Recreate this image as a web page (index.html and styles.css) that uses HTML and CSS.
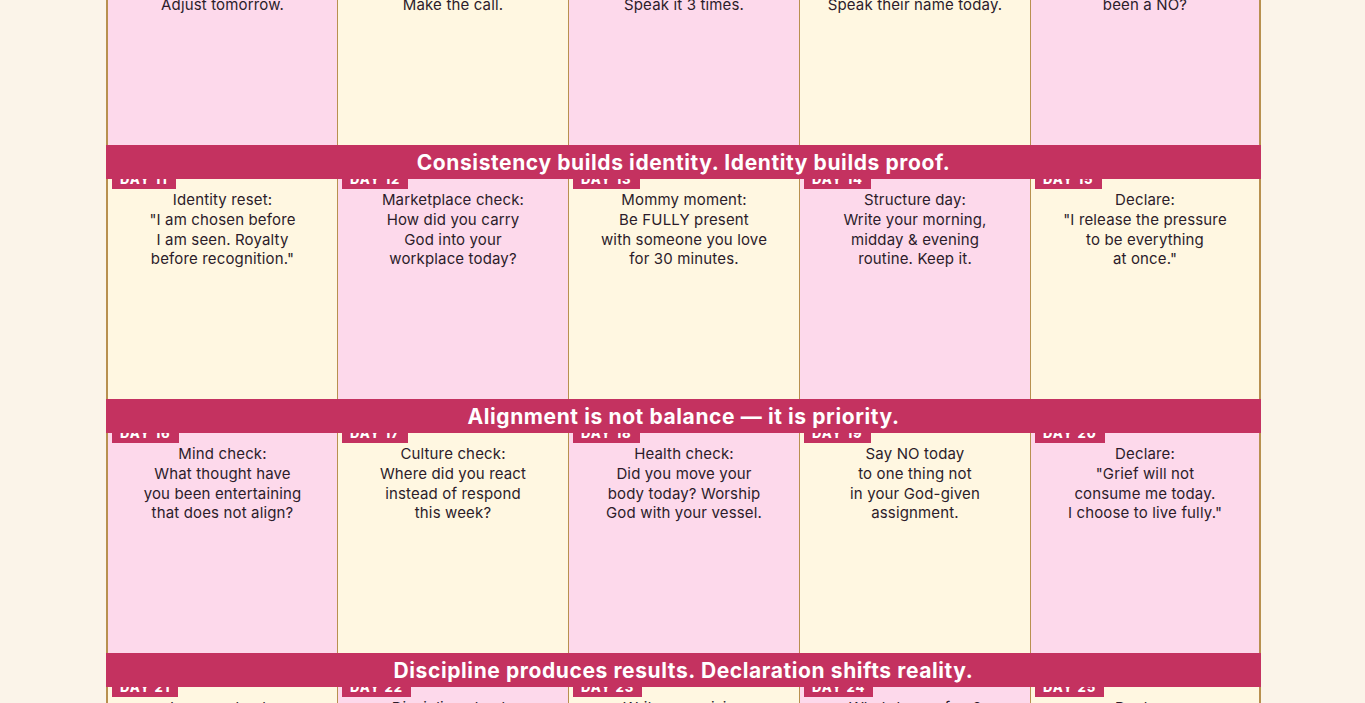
FILE: index.html
```html
<!DOCTYPE html>
<html lang="en">
<head>
<meta charset="utf-8">
<title>30-Day Alignment Calendar</title>
<link rel="stylesheet" href="styles.css">
</head>
<body>
<main class="page">
  <section class="calendar">
    <div class="week">
      <div class="cell pink"><span class="badge">Day 6</span><p>Evening review:<br>What worked today?<br>What didn't?<br>Adjust tomorrow.</p></div>
      <div class="cell cream"><span class="badge">Day 7</span><p>Relationship check:<br>Who have you been<br>meaning to reach?<br>Make the call.</p></div>
      <div class="cell pink"><span class="badge">Day 8</span><p>Declare:<br>"I am built for<br>this season."<br>Speak it 3 times.</p></div>
      <div class="cell cream"><span class="badge">Day 9</span><p>Gratitude:<br>Who poured into you<br>this year?<br>Speak their name today.</p></div>
      <div class="cell pink"><span class="badge">Day 10</span><p>Boundary check:<br>Where have you said<br>YES when it should have<br>been a NO?</p></div>
    </div>
    <div class="banner">Consistency builds identity. Identity builds proof.</div>
    <div class="week">
      <div class="cell cream"><span class="badge">Day 11</span><p>Identity reset:<br>"I am chosen before<br>I am seen. Royalty<br>before recognition."</p></div>
      <div class="cell pink"><span class="badge">Day 12</span><p>Marketplace check:<br>How did you carry<br>God into your<br>workplace today?</p></div>
      <div class="cell cream"><span class="badge">Day 13</span><p>Mommy moment:<br>Be FULLY present<br>with someone you love<br>for 30 minutes.</p></div>
      <div class="cell pink"><span class="badge">Day 14</span><p>Structure day:<br>Write your morning,<br>midday &amp; evening<br>routine. Keep it.</p></div>
      <div class="cell cream"><span class="badge">Day 15</span><p>Declare:<br>"I release the pressure<br>to be everything<br>at once."</p></div>
    </div>
    <div class="banner">Alignment is not balance — it is priority.</div>
    <div class="week">
      <div class="cell pink"><span class="badge">Day 16</span><p>Mind check:<br>What thought have<br>you been entertaining<br>that does not align?</p></div>
      <div class="cell cream"><span class="badge">Day 17</span><p>Culture check:<br>Where did you react<br>instead of respond<br>this week?</p></div>
      <div class="cell pink"><span class="badge">Day 18</span><p>Health check:<br>Did you move your<br>body today? Worship<br>God with your vessel.</p></div>
      <div class="cell cream"><span class="badge">Day 19</span><p>Say NO today<br>to one thing not<br>in your God-given<br>assignment.</p></div>
      <div class="cell pink"><span class="badge">Day 20</span><p>Declare:<br>"Grief will not<br>consume me today.<br>I choose to live fully."</p></div>
    </div>
    <div class="banner">Discipline produces results. Declaration shifts reality.</div>
    <div class="week">
      <div class="cell cream"><span class="badge">Day 21</span><p>Legacy check:<br>What are you building<br>that outlives you?<br>Name it.</p></div>
      <div class="cell pink"><span class="badge">Day 22</span><p>Discipline check:<br>What habit is<br>working for you?<br>Double it.</p></div>
      <div class="cell cream"><span class="badge">Day 23</span><p>Write your vision<br>in one sentence.<br>Read it aloud<br>tonight.</p></div>
      <div class="cell pink"><span class="badge">Day 24</span><p>What do you fear?<br>Name it. Then<br>hand it to God<br>in prayer.</p></div>
      <div class="cell cream"><span class="badge">Day 25</span><p>Declare:<br>"I am aligned,<br>assigned and<br>appointed."</p></div>
    </div>
  </section>
</main>
</body>
</html>
```

FILE: styles.css
```css
* {
  box-sizing: border-box;
}

html, body {
  margin: 0;
  padding: 0;
}

body {
  background: #fbf4e9;
  color: #2c1c2a;
  font-family: "Inter", "Noto Sans", sans-serif;
  overflow: hidden;
}

.page {
  height: 703px;
  overflow: hidden;
}

.calendar {
  width: 1155px;
  margin: -75px 0 0 106px;
}

.week {
  display: grid;
  grid-template-columns: repeat(5, 1fr);
  height: 220px;
}

.cell {
  position: relative;
  border-left: 1px solid #b8904f;
  padding: 11px 4px 0;
  text-align: center;
}

.cell:first-child {
  border-left: 2px solid #b8904f;
}

.cell:last-child {
  border-right: 2px solid #b8904f;
}

.pink {
  background: #fdd9eb;
}

.cream {
  background: #fff7e1;
}

.cell p {
  margin: 0;
  font-size: 15px;
  line-height: 19.8px;
  font-weight: 400;
  letter-spacing: 0.15px;
}

.badge {
  position: absolute;
  top: -10px;
  left: 4px;
  background: #c43260;
  color: #ffffff;
  font-size: 13px;
  font-weight: 800;
  letter-spacing: 1px;
  line-height: 16px;
  padding: 2px 8px;
  text-transform: uppercase;
}

.banner {
  position: relative;
  z-index: 2;
  height: 34px;
  background: #c43260;
  color: #ffffff;
  font-size: 21px;
  font-weight: 700;
  letter-spacing: 0.6px;
  display: flex;
  align-items: center;
  justify-content: center;
}
```
